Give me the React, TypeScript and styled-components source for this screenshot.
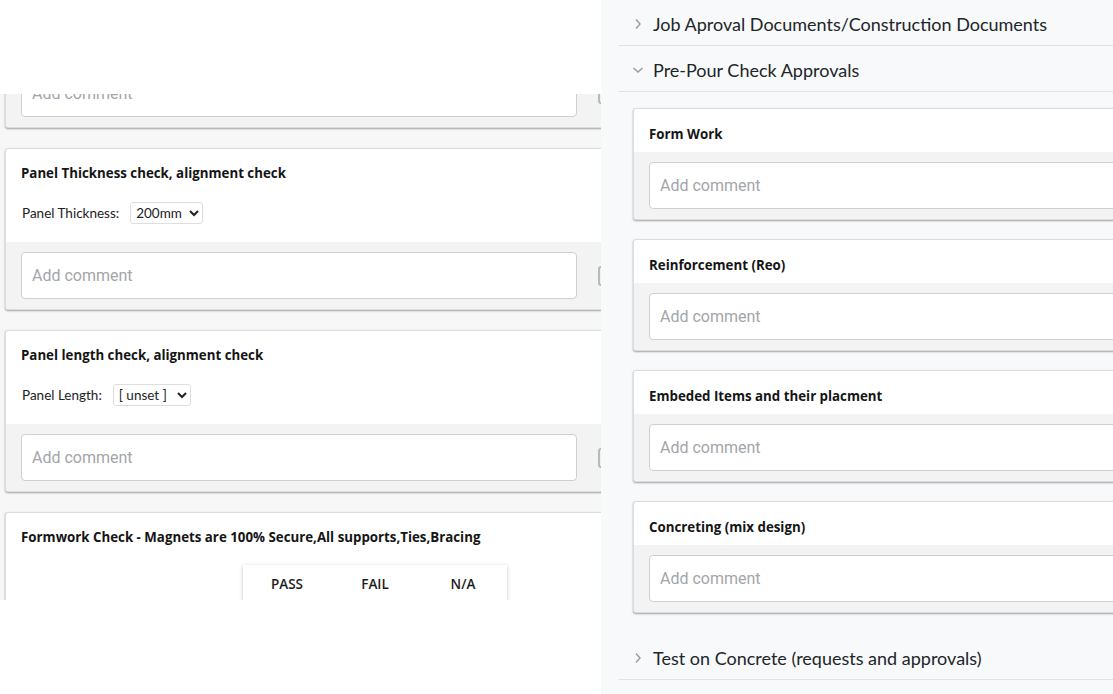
import React, { useLayoutEffect, useRef } from "react";
import styled, { createGlobalStyle } from "styled-components";

const GlobalStyle = createGlobalStyle`
  html, body { margin: 0; padding: 0; background: #fff; }
  body { font-family: Lato, "Liberation Sans", sans-serif; color: #1a1a1a; }
  * { box-sizing: border-box; }
`;

const Page = styled.div`
  display: grid;
  grid-template-columns: 601px 512px;
  height: 694px;
  overflow: hidden;
`;

const LeftColumn = styled.div`
  display: flex;
  flex-direction: column;
  background: #fff;
  overflow: hidden;
`;

const TopBar = styled.div`
  height: 94px;
  flex: none;
  background: #fff;
`;

const Viewport = styled.div`
  height: 506px;
  flex: none;
  overflow: hidden;
  background: #f7f7f7;
`;

const CardList = styled.div<{ $gap: number }>`
  display: flex;
  flex-direction: column;
  gap: ${(p) => p.$gap}px;
  width: 760px;
`;

const LeftList = styled(CardList)`
  padding: 20px 0 40px 5px;
`;

const Card = styled.div`
  width: 740px;
  background: #fff;
  border: 1px solid #dcdcdc;
  border-radius: 3px;
  box-shadow: 0 1px 2px rgba(0, 0, 0, 0.35);
  overflow: hidden;
`;

const CardHead = styled.div<{ $fields?: boolean }>`
  padding: ${(p) => (p.$fields ? "16px 15px 10px" : "17px 15px 9px")};
`;

const Title = styled.div`
  font-family: "Open Sans", Lato, sans-serif;
  font-weight: 700;
  font-size: 13.3px;
  line-height: 17px;
  color: #151515;
`;

const FieldRow = styled.label`
  display: flex;
  align-items: center;
  gap: 11px;
  height: 22px;
  margin: 20px 0 8px 1px;
  font-size: 13.5px;
  color: #222;
`;

const Select = styled.select`
  height: 22px;
  font-family: Lato, "Liberation Sans", sans-serif;
  font-size: 13.5px;
  color: #222;
  background: #fff;
  border: 1px solid #dedede;
  border-radius: 3px;
  padding: 0 1px;
`;

const CommentArea = styled.div`
  display: flex;
  align-items: center;
  gap: 21px;
  background: #f3f3f3;
  padding: 10px 15px 10px;
`;

const CommentInput = styled.input`
  width: 556px;
  height: 47px;
  flex: none;
  border: 1px solid #cfcfcf;
  border-radius: 4px;
  background: #fff;
  padding: 0 10px;
  font-family: Roboto, "Liberation Sans", sans-serif;
  font-size: 16px;
  color: #333;
  &::placeholder { color: #a4a4ac; }
`;

const AttachButton = styled.button`
  width: 34px;
  height: 20px;
  flex: none;
  border: 2px solid #b9b9b9;
  border-radius: 3px;
  background: #f0f0f0;
  padding: 0;
`;

const CheckTable = styled.div`
  width: 264px;
  margin: 19px auto 0;
  display: grid;
  grid-template-columns: repeat(3, 1fr);
  background: #fff;
  box-shadow: 0 1px 4px rgba(0, 0, 0, 0.22);
`;

const CheckHeadCell = styled.div`
  height: 37px;
  display: flex;
  align-items: center;
  justify-content: center;
  font-family: "Open Sans", Lato, sans-serif;
  font-size: 13.5px;
  font-weight: 600;
  color: #1c1c1c;
`;

const CheckCell = styled.div`
  height: 40px;
  display: flex;
  align-items: center;
  justify-content: center;
`;

const Radio = styled.span`
  width: 16px;
  height: 16px;
  border: 1px solid #888;
  border-radius: 50%;
`;

const RightColumn = styled.div`
  background: #f8f9fa;
  overflow: hidden;
`;

const Accordion = styled.div`
  margin-left: 18px;
  width: 900px;
`;

const AccHeader = styled.div`
  display: flex;
  align-items: center;
  gap: 9px;
  height: 46px;
  padding: 3px 0 0 13px;
  border-bottom: 1px solid #dfe2e6;
  font-size: 18px;
  color: #212529;
`;

const AccBody = styled.div`
  padding: 16px 0 21px 14px;
`;

const ChevronBox = styled.span`
  width: 12px;
  height: 12px;
  display: flex;
  align-items: center;
  justify-content: center;
`;

const Chevron = ({ open }: { open: boolean }) => (
  <ChevronBox>
    {open ? (
      <svg width="12" height="12" viewBox="0 0 12 12" fill="none" stroke="#9a9a9a" strokeWidth="1.4">
        <polyline points="1.5,4 6,8 10.5,4" />
      </svg>
    ) : (
      <svg width="12" height="12" viewBox="0 0 12 12" fill="none" stroke="#9a9a9a" strokeWidth="1.4">
        <polyline points="4,1.5 8,6 4,10.5" />
      </svg>
    )}
  </ChevronBox>
);

const Comment = () => (
  <CommentArea>
    <CommentInput placeholder="Add comment" />
    <AttachButton aria-label="attach" />
  </CommentArea>
);

type SelectCardProps = { title: string; label: string; value: string; options: string[] };

const SelectCard = ({ title, label, value, options }: SelectCardProps) => (
  <Card>
    <CardHead $fields>
      <Title>{title}</Title>
      <FieldRow>
        {label}
        <Select defaultValue={value}>
          {options.map((o) => (
            <option key={o}>{o}</option>
          ))}
        </Select>
      </FieldRow>
    </CardHead>
    <Comment />
  </Card>
);

const SimpleCard = ({ title }: { title: string }) => (
  <Card>
    <CardHead>
      <Title>{title}</Title>
    </CardHead>
    <Comment />
  </Card>
);

export default function App() {
  const viewRef = useRef<HTMLDivElement>(null);
  useLayoutEffect(() => {
    if (viewRef.current) viewRef.current.scrollTop = 55;
  }, []);

  return (
    <>
      <GlobalStyle />
      <Page>
        <LeftColumn>
          <TopBar />
          <Viewport ref={viewRef}>
            <LeftList $gap={20}>
              <Card>
                <Comment />
              </Card>
              <SelectCard
                title="Panel Thickness check, alignment check"
                label="Panel Thickness:"
                value="200mm"
                options={["[ unset ]", "150mm", "200mm", "250mm"]}
              />
              <SelectCard
                title="Panel length check, alignment check"
                label="Panel Length:"
                value="[ unset ]"
                options={["[ unset ]", "6000mm"]}
              />
              <Card>
                <CardHead $fields>
                  <Title>Formwork Check - Magnets are 100% Secure,All supports,Ties,Bracing</Title>
                  <CheckTable>
                    <CheckHeadCell>PASS</CheckHeadCell>
                    <CheckHeadCell>FAIL</CheckHeadCell>
                    <CheckHeadCell>N/A</CheckHeadCell>
                    <CheckCell><Radio /></CheckCell>
                    <CheckCell><Radio /></CheckCell>
                    <CheckCell><Radio /></CheckCell>
                  </CheckTable>
                </CardHead>
                <Comment />
              </Card>
            </LeftList>
          </Viewport>
        </LeftColumn>
        <RightColumn>
          <Accordion>
            <AccHeader>
              <Chevron open={false} />
              Job Aproval Documents/Construction Documents
            </AccHeader>
            <AccHeader>
              <Chevron open />
              Pre-Pour Check Approvals
            </AccHeader>
            <AccBody>
              <CardList $gap={19}>
                <SimpleCard title="Form Work" />
                <SimpleCard title="Reinforcement (Reo)" />
                <SimpleCard title="Embeded Items and their placment" />
                <SimpleCard title="Concreting (mix design)" />
              </CardList>
            </AccBody>
            <AccHeader>
              <Chevron open={false} />
              Test on Concrete (requests and approvals)
            </AccHeader>
          </Accordion>
        </RightColumn>
      </Page>
    </>
  );
}
